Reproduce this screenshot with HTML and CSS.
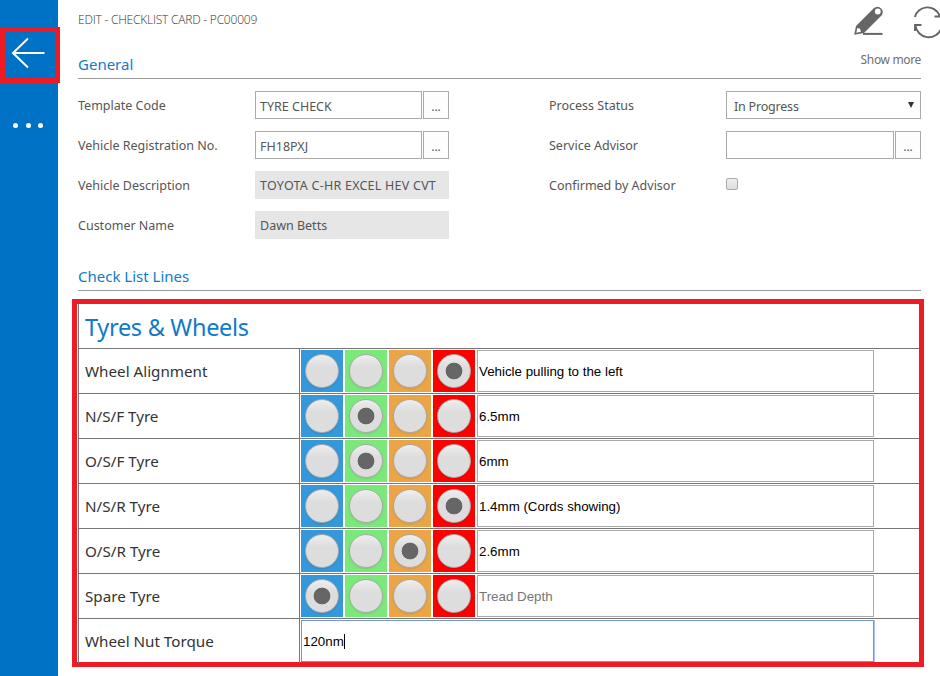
FILE: index.html
```html
<!DOCTYPE html>
<html lang="en">
<head>
<meta charset="utf-8">
<title>Edit - Checklist Card</title>
<link rel="stylesheet" href="styles.css">
</head>
<body>
<aside class="sidebar">
  <div class="back"><svg width="50" height="46" viewBox="5 32 50 46"><path d="M44.5 53H13M28 38.5L13 53L28 67.500" fill="none" stroke="#fff" stroke-width="2"/></svg></div>
  <div class="dots"><i></i><i></i><i></i></div>
</aside>
<main class="page">
  <header class="top">
    <div class="crumb">EDIT - CHECKLIST CARD - PC00009</div>
    <svg class="tools" width="88" height="40" viewBox="852 0 88 40">
      <path d="M854.200 34.800L856 26L873.500 8.500Q877.500 5 881.500 8.800Q884 12 881.500 15.500L864 33Z" fill="#666"/>
      <circle cx="877.800" cy="11.500" r="2.900" fill="#fff"/>
      <path d="M857.300 28L856.300 32.700L861 31.700L860 28.800Z" fill="#fff"/>
      <path d="M863 33.900H882.500" stroke="#666" stroke-width="2"/>
      <path d="M914.900 17A13 13 0 0 1 939.500 15.500M941 29A13.300 13.300 0 0 1 915.500 25.500M934.500 16.500H942M915 31V25H921.500" fill="none" stroke="#666" stroke-width="1.900"/>
    </svg>
  </header>
  <div class="section general"><h2>General</h2><span class="more">Show more</span></div>
  <section class="fields">
    <div class="column">
      <div class="field"><label>Template Code</label><div class="control"><div class="input">TYRE CHECK</div><button>...</button></div></div>
      <div class="field"><label>Vehicle Registration No.</label><div class="control"><div class="input">FH18PXJ</div><button>...</button></div></div>
      <div class="field"><label>Vehicle Description</label><div class="control"><div class="readonly vehicle">TOYOTA C-HR EXCEL HEV CVT</div></div></div>
      <div class="field"><label>Customer Name</label><div class="control"><div class="readonly">Dawn Betts</div></div></div>
    </div>
    <div class="column right">
      <div class="field"><label>Process Status</label><div class="control"><div class="input select"><span>In Progress</span><i class="caret"></i></div></div></div>
      <div class="field"><label>Service Advisor</label><div class="control"><div class="input"></div><button>...</button></div></div>
      <div class="field"><label>Confirmed by Advisor</label><div class="control"><div class="check"></div></div></div>
    </div>
  </section>
  <div class="section lines"><h2>Check List Lines</h2></div>
  <section class="checklist">
    <div class="grid">
      <div class="title"><span>Tyres &amp; Wheels</span></div>
      <div class="row"><div class="name">Wheel Alignment</div><div class="cells"><b class="blue"><i></i></b><b class="green"><i></i></b><b class="orange"><i></i></b><b class="red"><i class="on"></i></b><div class="note">Vehicle pulling to the left</div></div></div>
      <div class="row"><div class="name">N/S/F Tyre</div><div class="cells"><b class="blue"><i></i></b><b class="green"><i class="on"></i></b><b class="orange"><i></i></b><b class="red"><i></i></b><div class="note">6.5mm</div></div></div>
      <div class="row"><div class="name">O/S/F Tyre</div><div class="cells"><b class="blue"><i></i></b><b class="green"><i class="on"></i></b><b class="orange"><i></i></b><b class="red"><i></i></b><div class="note">6mm</div></div></div>
      <div class="row"><div class="name">N/S/R Tyre</div><div class="cells"><b class="blue"><i></i></b><b class="green"><i></i></b><b class="orange"><i></i></b><b class="red"><i class="on"></i></b><div class="note">1.4mm (Cords showing)</div></div></div>
      <div class="row"><div class="name">O/S/R Tyre</div><div class="cells"><b class="blue"><i></i></b><b class="green"><i></i></b><b class="orange"><i class="on"></i></b><b class="red"><i></i></b><div class="note">2.6mm</div></div></div>
      <div class="row"><div class="name">Spare Tyre</div><div class="cells"><b class="blue"><i class="on"></i></b><b class="green"><i></i></b><b class="orange"><i></i></b><b class="red"><i></i></b><div class="note hint">Tread Depth</div></div></div>
      <div class="row last"><div class="name">Wheel Nut Torque</div><div class="cells"><div class="note focus">120nm<span class="cursor"></span></div></div></div>
    </div>
  </section>
</main>
</body>
</html>
```
FILE: styles.css
```css
* { box-sizing: border-box; }
body { margin: 0; width: 940px; height: 676px; overflow: hidden; display: flex; background: #fff; font-family: "Noto Sans", "Open Sans", sans-serif; font-size: 12.5px; color: #555; white-space: nowrap; }
.sidebar { width: 58px; height: 676px; background: #0072c6; padding-top: 27px; flex: none; }
.back { width: 60px; height: 56px; border: 5px solid #ed1c24; position: relative; }
.back svg { display: block; }
.dots { display: flex; gap: 7.500px; padding: 39.500px 0 0 13px; }
.dots i { width: 5px; height: 5px; border-radius: 50%; background: #fff; }
.page { width: 882px; flex: none; padding-left: 14px; }
.top { height: 40px; display: flex; justify-content: space-between; padding-left: 6px; }
.tools { display: block; }
.crumb { font-family: "Open Sans", sans-serif; font-weight: 300; font-size: 12px; line-height: 18px; padding-top: 11px; letter-spacing: -0.22px; color: #333; }
.section { margin-left: 6px; width: 843px; border-bottom: 1px solid #999; display: flex; justify-content: space-between; }
.section h2 { margin: 0; font-size: 15px; font-weight: 400; color: #0f7acb; line-height: 22px; }
.general { height: 39px; padding-top: 13px; }
.more { color: #707070; line-height: 18px; margin-top: -2px; font-size: 12px; letter-spacing: -0.35px; }
.fields { margin-left: 6px; height: 186px; padding-top: 12px; display: flex; }
.column { display: flex; flex-direction: column; gap: 12px; width: 371px; }
.right { margin-left: 100px; width: 372px; }
.field { display: flex; height: 28px; }
.field label { width: 177px; line-height: 29px; }
.control { display: flex; gap: 1px; flex: 1; }
.input { border: 1px solid #aaa; flex: 1; line-height: 29px; padding-left: 4px; }
.control button { width: 26px; border: 1px solid #aaa; background: #fdfdfd; padding: 3px 0 0; font: 12px "Noto Sans", sans-serif; color: #555; }
.readonly { flex: 1; background: #e6e6e6; line-height: 29px; padding-left: 5px; }
.vehicle { letter-spacing: 0.24px; }
.select { display: flex; justify-content: space-between; padding: 0 6px 0 7px; letter-spacing: -0.2px; }
.caret { border: 3.500px solid transparent; border-top: 6px solid #333; border-bottom: 0; margin-top: 10px; height: 6px; }
.check { width: 12px; height: 12px; margin-top: 7px; border: 1px solid #aaa; border-radius: 2px; background: linear-gradient(#eee, #ddd); }
.lines { height: 26px; }
.checklist { margin-top: 8px; width: 852px; height: 368px; border: 5px solid #ed1c24; padding-left: 1px; }
.grid { border-left: 1px solid #777; }
.title { height: 45px; border-bottom: 1px solid #777; padding-left: 6px; font-size: 23.500px; letter-spacing: -0.3px; line-height: 47px; color: #0f7acb; }
.row { display: flex; height: 45px; border-bottom: 1px solid #777; }
.name { width: 221px; border-right: 1px solid #777; padding-left: 6px; font-size: 15.200px; line-height: 45px; color: #333; }
.cells { display: flex; gap: 2px; padding: 1px; width: 575px; }
.cells b { width: 42px; height: 42px; flex: none; padding: 4px; }
.cells b i { display: block; width: 34px; height: 34px; border-radius: 50%; border: 1px solid #aaa; background: linear-gradient(#eee, #ddd 38%, #ddd); box-shadow: 0 1px 2px rgba(0,0,0,.1); }
.cells b .on { background: radial-gradient(circle, #666 8px, transparent 8.700px), linear-gradient(#eee, #ddd 38%, #ddd); }
.blue { background: #3498db; }
.green { background: #7be87b; }
.orange { background: #eca546; }
.red { background: #f00; }
.note { flex: 1; height: 42px; border: 1px solid #a9a9a9; font: 13.333px/41px "Liberation Sans", sans-serif; padding-left: 1px; color: #000; }
.hint { color: #757575; }
.last { height: 44px; border-bottom: 0; }
.focus { border-color: #7496d8; box-shadow: 1px 0 #a9c5f5; display: flex; align-items: center; }
.cursor { width: 1px; height: 15px; background: #000; }
```
